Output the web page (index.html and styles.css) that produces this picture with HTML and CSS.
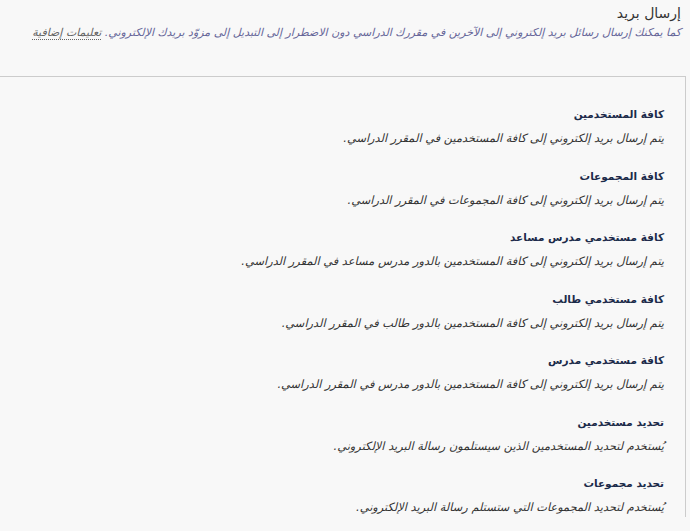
FILE: index.html
```html
<!DOCTYPE html>
<html lang="ar" dir="rtl">
<head>
<meta charset="utf-8">
<title>إرسال بريد</title>
<link rel="stylesheet" href="styles.css">
</head>
<body>
<div class="page">
  <header class="page-header">
    <h1 class="page-title">إرسال بريد</h1>
    <p class="page-desc">كما يمكنك إرسال رسائل بريد إلكتروني إلى الآخرين في مقررك الدراسي دون الاضطرار إلى التبديل إلى مزوّد بريدك الإلكتروني. <span class="more-help">تعليمات إضافية</span></p>
  </header>
  <section class="panel">
    <ul class="options">
      <li class="option">
        <h3 class="option-title">كافة المستخدمين</h3>
        <p class="option-desc">يتم إرسال بريد إلكتروني إلى كافة المستخدمين في المقرر الدراسي.</p>
      </li>
      <li class="option">
        <h3 class="option-title">كافة المجموعات</h3>
        <p class="option-desc">يتم إرسال بريد إلكتروني إلى كافة المجموعات في المقرر الدراسي.</p>
      </li>
      <li class="option">
        <h3 class="option-title">كافة مستخدمي مدرس مساعد</h3>
        <p class="option-desc">يتم إرسال بريد إلكتروني إلى كافة المستخدمين بالدور مدرس مساعد في المقرر الدراسي.</p>
      </li>
      <li class="option">
        <h3 class="option-title">كافة مستخدمي طالب</h3>
        <p class="option-desc">يتم إرسال بريد إلكتروني إلى كافة المستخدمين بالدور طالب في المقرر الدراسي.</p>
      </li>
      <li class="option">
        <h3 class="option-title">كافة مستخدمي مدرس</h3>
        <p class="option-desc">يتم إرسال بريد إلكتروني إلى كافة المستخدمين بالدور مدرس في المقرر الدراسي.</p>
      </li>
      <li class="option">
        <h3 class="option-title">تحديد مستخدمين</h3>
        <p class="option-desc">يُستخدم لتحديد المستخدمين الذين سيستلمون رسالة البريد الإلكتروني.</p>
      </li>
      <li class="option">
        <h3 class="option-title">تحديد مجموعات</h3>
        <p class="option-desc">يُستخدم لتحديد المجموعات التي ستستلم رسالة البريد الإلكتروني.</p>
      </li>
    </ul>
  </section>
</div>
</body>
</html>
```

FILE: styles.css
```css
html, body {
  margin: 0;
  padding: 0;
  background: #f8f8f8;
}
body {
  font-family: "DejaVu Sans", sans-serif;
  color: #333;
  overflow: hidden;
  height: 531px;
}
.page {
  direction: rtl;
}
.page-header {
  padding: 3px 9px 0 0;
  height: 71px;
  box-sizing: border-box;
}
.page-title {
  margin: 0;
  font-size: 14px;
  font-weight: normal;
  color: #333;
  line-height: 20px;
}
.page-desc {
  margin: 2px 0 0;
  font-size: 11px;
  font-style: italic;
  color: #666699;
  line-height: 16px;
  white-space: nowrap;
}
.more-help {
  color: #666;
  border-bottom: 1px dotted #666;
}
.panel {
  margin: 5px 4px 0 -2px;
  border-top: 1px solid #cccccc;
  border-right: 1px solid #cccccc;
  padding: 28px 21px 0 0;
}
.options {
  list-style: none;
  margin: 0;
  padding: 0;
  display: flex;
  flex-direction: column;
  gap: 18.5px;
}
.option-title {
  margin: 0;
  font-size: 10.5px;
  font-weight: bold;
  color: #1c2b4a;
  line-height: 18px;
}
.option-desc {
  margin: 5px 0 0;
  font-size: 11.4px;
  font-style: italic;
  color: #333;
  line-height: 20px;
}
```
